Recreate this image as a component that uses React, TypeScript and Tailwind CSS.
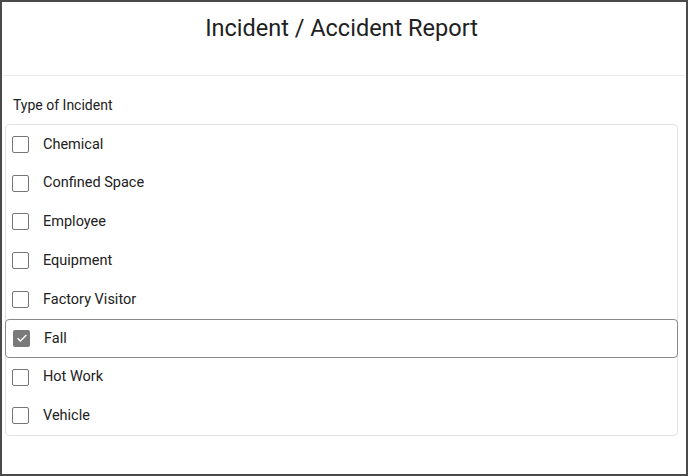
import React, { useState } from "react";

const types = [
  "Chemical",
  "Confined Space",
  "Employee",
  "Equipment",
  "Factory Visitor",
  "Fall",
  "Hot Work",
  "Vehicle",
];

function CheckBox({ checked }: { checked: boolean }) {
  if (checked) {
    return (
      <span className="flex h-[17px] w-[17px] items-center justify-center rounded-[2px] bg-[#7a7a7a]">
        <svg viewBox="0 0 16 16" className="h-3.5 w-3.5" fill="none">
          <path d="M3 8.2l3.2 3.2L13 4.6" stroke="#fff" strokeWidth="1.6" />
        </svg>
      </span>
    );
  }
  return <span className="h-[17px] w-[17px] rounded-[2px] border-[1.5px] border-[#767676] bg-white" />;
}

export default function App() {
  const [selected, setSelected] = useState<string[]>(["Fall"]);

  const toggle = (name: string) => {
    setSelected((s) => (s.includes(name) ? s.filter((x) => x !== name) : [...s, name]));
  };

  return (
    <div
      className="flex h-[476px] w-[688px] flex-col border-2 border-[#4a4a4a] bg-white text-[#212121]"
      style={{ fontFamily: "Roboto, 'Noto Sans', sans-serif" }}
    >
      <div className="flex h-[74px] justify-center border-b border-[#ececec] pr-[5px] pt-[10px]">
        <h1 className="text-[23.5px] leading-[32px]">Incident / Accident Report</h1>
      </div>
      <div className="pl-[3px] pr-[8px] pt-[19px]">
        <div className="pl-[8px] text-[14px] leading-[20px]">Type of Incident</div>
        <div className="mt-[9px] rounded-[4px] border border-[#e2e2e2]">
          {types.map((t) => {
            const on = selected.includes(t);
            return (
              <div
                key={t}
                onClick={() => toggle(t)}
                className={
                  on
                    ? "-mx-px flex h-[38.8px] cursor-pointer items-center gap-[14px] rounded-[4px] border border-[#8a8a8a] pl-[7px]"
                    : "flex h-[38.8px] cursor-pointer items-center gap-[14px] pl-[6px]"
                }
              >
                <CheckBox checked={on} />
                <span className="text-[14.5px]">{t}</span>
              </div>
            );
          })}
        </div>
      </div>
    </div>
  );
}
